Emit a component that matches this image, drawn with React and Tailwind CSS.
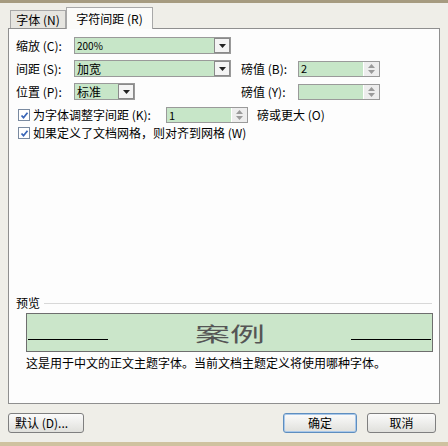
import React from "react";

const F = { fontFamily: '"Noto Sans CJK SC", "Liberation Sans", sans-serif' };

function DropBtn() {
  return (
    <div className="w-[16px] h-[15px] border border-[#8a8a8a] bg-[#f4f4f4] flex items-center justify-center shrink-0">
      <svg width="7" height="4" viewBox="0 0 7 4"><path d="M0 0h7L3.5 4z" fill="#222" /></svg>
    </div>
  );
}

function Combo({ w, text, big }) {
  return (
    <div className={`h-[17px] border border-[#9a9a9a] bg-[#c7e6c8] flex items-center shrink-0 ${w}`}>
      <span className={`flex-1 pl-[2px] leading-none ${big ? "text-[12px]" : "text-[10px]"}`}>{text}</span>
      <DropBtn />
    </div>
  );
}

function Spin({ text }) {
  return (
    <div className="w-[82px] h-[16px] border border-[#9a9a9a] bg-[#c7e6c8] flex items-center shrink-0">
      <span className="flex-1 pl-[2px] text-[11px] leading-none">{text}</span>
      <div className="w-[16px] h-[14px] bg-[#ededed] border-l border-[#ffffff] flex flex-col items-center justify-center gap-[2px]">
        <svg width="7" height="4" viewBox="0 0 7 4"><path d="M0 4h7L3.5 0z" fill="#9a9a9a" /></svg>
        <svg width="7" height="4" viewBox="0 0 7 4"><path d="M0 0h7L3.5 4z" fill="#9a9a9a" /></svg>
      </div>
    </div>
  );
}

function Check() {
  return (
    <div className="w-[12px] h-[12px] border border-[#7a8aa0] bg-white flex items-center justify-center shrink-0">
      <svg width="9" height="9" viewBox="0 0 9 9"><path d="M1.5 4.5l2 2.2L7.5 1.8" stroke="#3a66b8" strokeWidth="1.8" fill="none" /></svg>
    </div>
  );
}

export default function App() {
  return (
    <div className="w-[448px] h-[446px] bg-[#efeee8] flex flex-col text-[12px] text-black overflow-hidden" style={F}>
      <div className="h-[3px] bg-[#a69b80] shrink-0" />
      <div className="flex items-end pl-[10px] h-[25px] shrink-0">
        <div className="w-[56px] h-[18px] border border-[#a8a8a8] border-b-0 bg-[#e6e5e0] flex items-center justify-center text-[12px] leading-none">字体 (N)</div>
        <div className="w-[87px] h-[22px] border border-[#a8a8a8] border-b-0 bg-[#fbfbf9] flex items-center justify-center text-[12px] leading-none relative top-[1px]">字符间距 (R)</div>
      </div>
      <div className="ml-[8px] w-[432px] h-[376px] border border-[#8f8f8f] bg-[#fdfdfd] shrink-0 flex flex-col pl-[7px] pt-[8px]">
        <div className="flex items-center h-[17px]">
          <span className="w-[58px] shrink-0">缩放 (C):</span>
          <Combo w="w-[157px]" text="200%" />
        </div>
        <div className="flex items-center h-[17px] mt-[6px]">
          <span className="w-[58px] shrink-0">间距 (S):</span>
          <Combo w="w-[157px]" text="加宽" big />
          <span className="ml-[10px] w-[57px] shrink-0 whitespace-nowrap">磅值 (B):</span>
          <Spin text="2" />
        </div>
        <div className="flex items-center h-[17px] mt-[6px]">
          <span className="w-[58px] shrink-0">位置 (P):</span>
          <Combo w="w-[61px]" text="标准" big />
          <span className="ml-[106px] w-[57px] shrink-0 whitespace-nowrap">磅值 (Y):</span>
          <Spin text="" />
        </div>
        <div className="flex items-center h-[16px] mt-[7px]">
          <div className="ml-[2px]"><Check /></div>
          <span className="ml-[3px] w-[133px] shrink-0">为字体调整字间距 (K):</span>
          <Spin text="1" />
          <span className="ml-[9px]">磅或更大 (O)</span>
        </div>
        <div className="flex items-center h-[16px] mt-[2px]">
          <div className="ml-[2px]"><Check /></div>
          <span className="ml-[3px]">如果定义了文档网格，则对齐到网格 (W)</span>
        </div>
        <div className="flex items-center mt-[155px] h-[14px]">
          <span className="leading-none">预览</span>
          <div className="flex-1 h-px bg-[#d8d8d8] ml-[4px] mr-[7px]" />
        </div>
        <div className="ml-[10px] mt-[3px] w-[407px] h-[39px] border border-[#6e6e6e] bg-[#cbe6ca] relative flex items-center justify-center">
          <div className="absolute left-[1px] top-[25px] w-[80px] h-px bg-black" />
          <div className="absolute right-[1px] top-[25px] w-[80px] h-px bg-black" />
          <span className="text-[20px] leading-none text-[#555] scale-x-[1.75] mt-[2px]">案例</span>
        </div>
        <div className="ml-[10px] mt-[5px] text-[12px] leading-none">这是用于中文的正文主题字体。当前文档主题定义将使用哪种字体。</div>
      </div>
      <div className="flex items-center h-[38px] shrink-0 pl-[8px]">
        <button className="w-[76px] h-[20px] border border-[#7f7f7f] rounded-[3px] bg-gradient-to-b from-[#fbfbfb] to-[#e0e0dc] text-[12px] leading-none pl-[6px] text-left">默认 (D)...</button>
        <button className="ml-[199px] w-[74px] h-[20px] border border-[#5e8ebf] rounded-[3px] bg-gradient-to-b from-[#fbfbfb] to-[#e0e0dc] text-[12px] leading-none shadow-[inset_0_0_0_1px_#a9c8ea]">确定</button>
        <button className="ml-[10px] w-[69px] h-[20px] border border-[#7f7f7f] rounded-[3px] bg-gradient-to-b from-[#fbfbfb] to-[#e0e0dc] text-[12px] leading-none">取消</button>
      </div>
      <div className="h-[4px] bg-[#cfc2a0] shrink-0" />
    </div>
  );
}
